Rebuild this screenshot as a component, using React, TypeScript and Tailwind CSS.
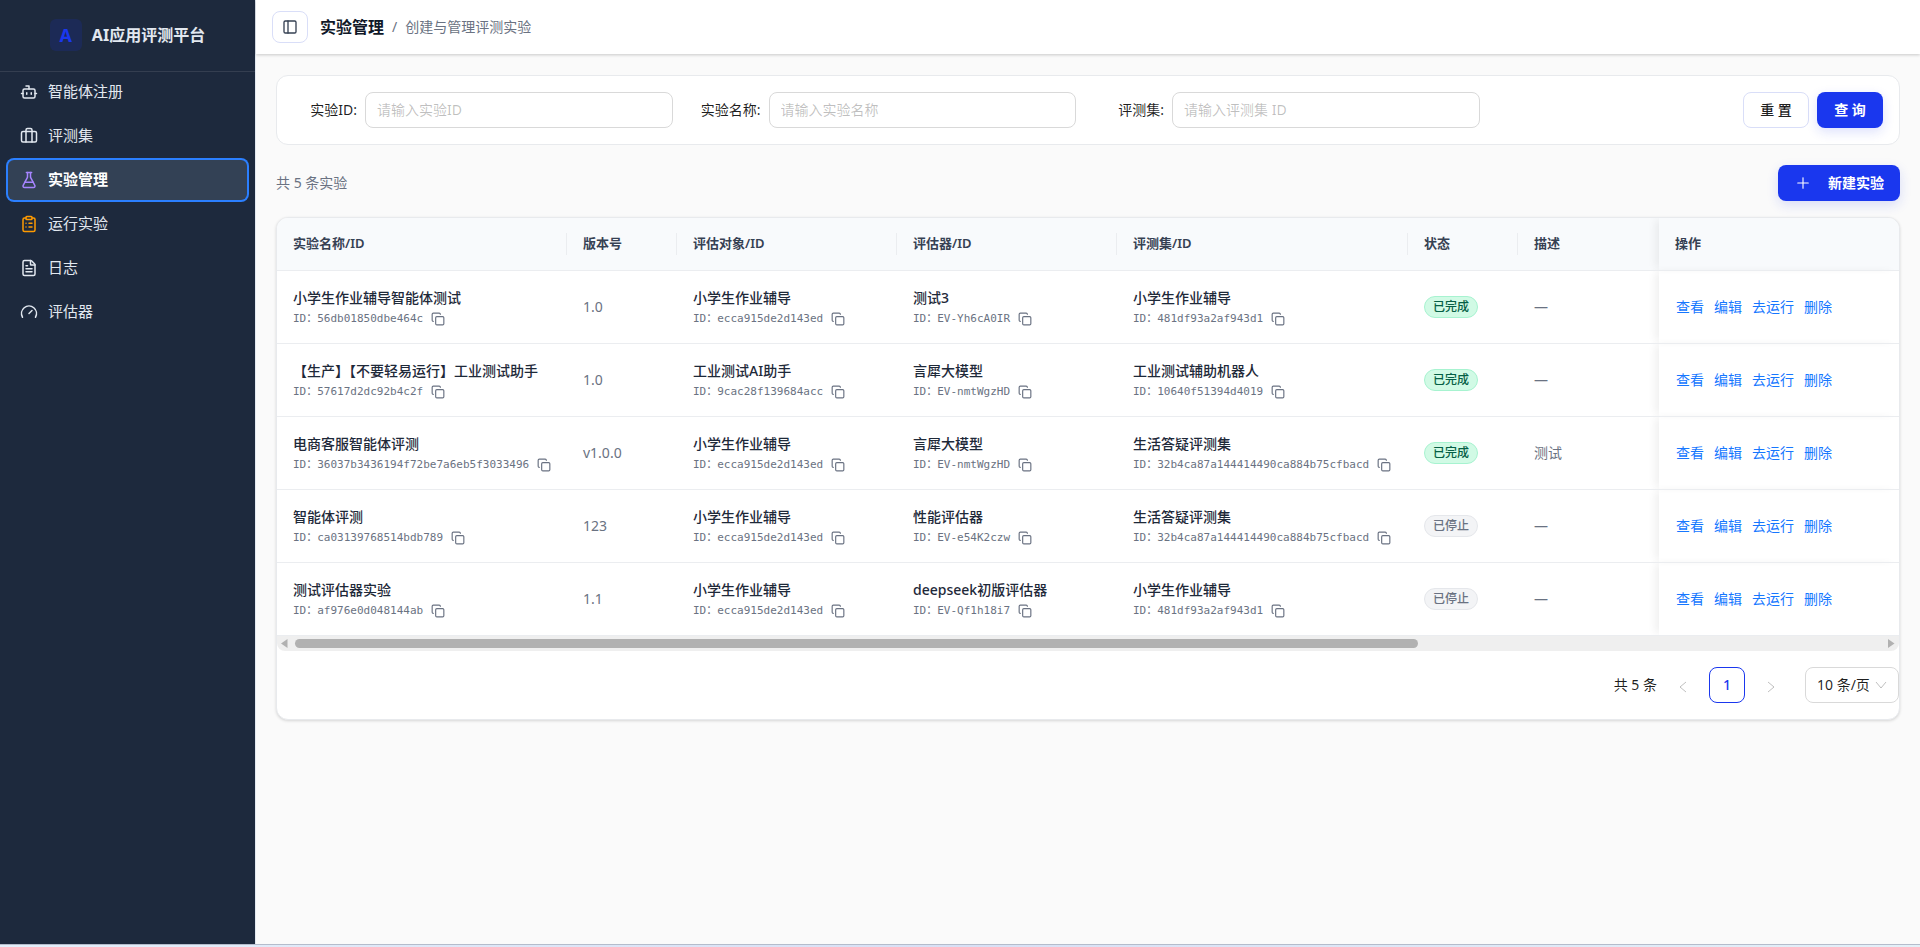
import { Bot, Briefcase, ClipboardList, Copy, FileText, FlaskConical, Gauge, PanelLeft, Plus } from 'lucide-react';

type Ref = { name: string; id: string };

type Experiment = {
  self: Ref;
  version: string;
  target: Ref;
  evaluator: Ref;
  dataset: Ref;
  status: 'done' | 'stopped';
  desc: string;
};

const homework: Ref = { name: '小学生作业辅导', id: 'ecca915de2d143ed' };
const yanxi: Ref = { name: '言犀大模型', id: 'EV-nmtWgzHD' };
const homeworkSet: Ref = { name: '小学生作业辅导', id: '481df93a2af943d1' };
const lifeSet: Ref = { name: '生活答疑评测集', id: '32b4ca87a144414490ca884b75cfbacd' };

const experiments: Experiment[] = [
  {
    self: { name: '小学生作业辅导智能体测试', id: '56db01850dbe464c' },
    version: '1.0',
    target: homework,
    evaluator: { name: '测试3', id: 'EV-Yh6cA0IR' },
    dataset: homeworkSet,
    status: 'done',
    desc: '—',
  },
  {
    self: { name: '【生产】【不要轻易运行】工业测试助手', id: '57617d2dc92b4c2f' },
    version: '1.0',
    target: { name: '工业测试AI助手', id: '9cac28f139684acc' },
    evaluator: yanxi,
    dataset: { name: '工业测试辅助机器人', id: '10640f51394d4019' },
    status: 'done',
    desc: '—',
  },
  {
    self: { name: '电商客服智能体评测', id: '36037b3436194f72be7a6eb5f3033496' },
    version: 'v1.0.0',
    target: homework,
    evaluator: yanxi,
    dataset: lifeSet,
    status: 'done',
    desc: '测试',
  },
  {
    self: { name: '智能体评测', id: 'ca03139768514bdb789' },
    version: '123',
    target: homework,
    evaluator: { name: '性能评估器', id: 'EV-e54K2czw' },
    dataset: lifeSet,
    status: 'stopped',
    desc: '—',
  },
  {
    self: { name: '测试评估器实验', id: 'af976e0d048144ab' },
    version: '1.1',
    target: homework,
    evaluator: { name: 'deepseek初版评估器', id: 'EV-Qf1h18i7' },
    dataset: homeworkSet,
    status: 'stopped',
    desc: '—',
  },
];

const menu = [
  { label: '智能体注册', icon: Bot, color: 'text-slate-200' },
  { label: '评测集', icon: Briefcase, color: 'text-slate-200' },
  { label: '实验管理', icon: FlaskConical, color: 'text-violet-400', active: true },
  { label: '运行实验', icon: ClipboardList, color: 'text-amber-500' },
  { label: '日志', icon: FileText, color: 'text-slate-200' },
  { label: '评估器', icon: Gauge, color: 'text-slate-200' },
];

const columns = [
  { title: '实验名称/ID', width: 'w-[290px]' },
  { title: '版本号', width: 'w-[110px]' },
  { title: '评估对象/ID', width: 'w-[220px]' },
  { title: '评估器/ID', width: 'w-[220px]' },
  { title: '评测集/ID', width: 'w-[291px]' },
  { title: '状态', width: 'w-[110px]' },
  { title: '描述', width: '' },
];

const Sidebar = () => (
  <aside className="w-64 shrink-0 border-r border-slate-200 bg-slate-800">
    <div className="flex h-[72px] items-center justify-center gap-2.5 border-b border-white/10 pb-0.5">
      <div className="flex size-8 items-center justify-center rounded-md bg-[#1a37ee]/15 text-lg font-bold text-[#1a37ee]">A</div>
      <span className="text-base font-bold text-slate-200">AI应用评测平台</span>
    </div>
    <nav className="flex flex-col gap-1 px-2">
      {menu.map(({ label, icon: Icon, color, active }) => (
        <a
          key={label}
          href="#"
          className={
            active
              ? 'flex h-10 items-center gap-2.5 rounded-md bg-[#334155] px-3 text-[15px] font-semibold text-white ring-2 ring-blue-500'
              : 'flex h-10 items-center gap-2.5 rounded-md px-3 text-[15px] text-slate-200'
          }
        >
          <Icon size={18} className={color} />
          {label}
        </a>
      ))}
    </nav>
  </aside>
);

const Field = ({ id, label, placeholder }: { id: string; label: string; placeholder: string }) => (
  <div className="flex items-center">
    <label htmlFor={id} className="w-[72px] shrink-0 pr-2 text-right whitespace-nowrap text-black/88">
      {label}:
    </label>
    <input
      id={id}
      placeholder={placeholder}
      className="h-9 w-full min-w-0 rounded-lg border border-[#d9d9d9] bg-white px-[11px] pb-0.5 placeholder:text-black/25"
    />
  </div>
);

const RefCell = ({ item }: { item: Ref }) => (
  <td className="px-4 pt-1">
    <div className="truncate font-medium text-gray-800">{item.name}</div>
    <div className="mt-px flex items-center gap-2 font-['DejaVu_Sans_Mono','Noto_Sans_CJK_SC',monospace] text-[11px] leading-5 text-gray-500">
      <span className="whitespace-nowrap">ID：{item.id}</span>
      <button aria-label="复制">
        <Copy size={14} />
      </button>
    </div>
  </td>
);

const Filters = () => (
  <section className="grid grid-cols-4 gap-6 rounded-xl border border-[#e8eaed] bg-white p-4">
    <Field id="exp-id" label="实验ID" placeholder="请输入实验ID" />
    <Field id="exp-name" label="实验名称" placeholder="请输入实验名称" />
    <Field id="exp-set" label="评测集" placeholder="请输入评测集 ID" />
    <div className="flex justify-end gap-2">
      <button className="h-9 w-[66px] rounded-lg border border-[#d9def8] bg-white font-medium text-black/88">重 置</button>
      <button className="h-9 w-[66px] rounded-lg bg-[#1a37ee] font-semibold text-white shadow-[0_4px_12px_rgba(26,55,238,0.15)]">查 询</button>
    </div>
  </section>
);

const ExperimentTable = () => (
  <table className="w-full table-fixed border-collapse text-left">
    <thead className="bg-[#f8fafc] text-[13px] text-gray-700">
      <tr className="h-[52px] border-b border-[#ebedf0]">
        {columns.map((c, i) => (
          <th key={c.title} className={`relative px-4 font-semibold ${c.width}`}>
            {c.title}
            {i < columns.length - 1 && <span className="absolute top-1/2 right-0 h-5.5 w-px -translate-y-1/2 bg-[#ebedf0]" />}
          </th>
        ))}
        <th className="w-60 px-4 font-semibold shadow-[-6px_0_8px_-2px_rgba(5,5,5,0.06)]">操作</th>
      </tr>
    </thead>
    <tbody>
      {experiments.map((e) => (
        <tr key={e.self.id} className="h-[73px] border-b border-[#ebedf0]">
          <RefCell item={e.self} />
          <td className="px-4 text-gray-500">{e.version}</td>
          <RefCell item={e.target} />
          <RefCell item={e.evaluator} />
          <RefCell item={e.dataset} />
          <td className="px-4">
            {e.status === 'done' ? (
              <span className="inline-block rounded-full border border-[#a7f3d0] bg-[#d1fae5] px-2 text-xs leading-5 font-medium text-[#065f46]">已完成</span>
            ) : (
              <span className="inline-block rounded-full border border-gray-200 bg-gray-100 px-2 text-xs leading-5 font-medium text-gray-500">已停止</span>
            )}
          </td>
          <td className="px-4 text-gray-500">{e.desc}</td>
          <td className="px-4 shadow-[-6px_0_8px_-2px_rgba(5,5,5,0.06)]">
            <div className="flex gap-2 text-[#1677ff]">
              <a href="#" className="px-px">查看</a>
              <a href="#" className="px-px">编辑</a>
              <a href="#" className="px-px">去运行</a>
              <a href="#" className="px-px">删除</a>
            </div>
          </td>
        </tr>
      ))}
    </tbody>
  </table>
);

const ScrollBar = () => (
  <div className="flex h-[15px] items-center gap-1 rounded-b-lg bg-[#efefef] px-1 text-[#b1b1b1]">
    <svg width="7" height="9" viewBox="0 0 7 9" fill="currentColor">
      <path d="M6.5 0v9L0 4.5z" />
    </svg>
    <div className="flex-1 px-[3px]">
      <div className="h-[9px] w-17/24 rounded-full bg-[#b1b1b1]" />
    </div>
    <svg width="7" height="9" viewBox="0 0 7 9" fill="currentColor">
      <path d="M0 0v9l6.5-4.5z" />
    </svg>
  </div>
);

const Arrow = ({ d, className = '' }: { d: string; className?: string }) => (
  <svg width="12" height="12" viewBox="0 0 12 12" fill="none" stroke="currentColor" className={className}>
    <path d={d} />
  </svg>
);

const Pagination = () => (
  <div className="flex items-center justify-end gap-2 py-4 text-black/88">
    <span>共 5 条</span>
    <button aria-label="上一页" disabled className="flex size-9 items-center justify-center pt-1 text-black/25">
      <Arrow d="M9 1 3 6l6 5" />
    </button>
    <button className="size-9 rounded-lg border border-[#1a37ee] font-medium text-[#1a37ee]">1</button>
    <button aria-label="下一页" disabled className="flex size-9 items-center justify-center pt-1 text-black/25">
      <Arrow d="m3 1 6 5-6 5" />
    </button>
    <div className="relative ml-2">
      <select aria-label="每页条数" className="h-9 w-[94px] appearance-none rounded-lg border border-[#d9d9d9] bg-white pl-[11px]">
        <option>10 条/页</option>
      </select>
      <Arrow d="m1 3 5 6 5-6" className="pointer-events-none absolute top-3 right-3 text-black/25" />
    </div>
  </div>
);

const App = () => {
  return (
    <div className="flex h-screen flex-col bg-[#fafafa] font-['Noto_Sans','Noto_Sans_CJK_SC',sans-serif] text-sm">
      <div className="flex min-h-0 flex-1 border-b border-[#b4bccb]">
        <Sidebar />
        <div className="flex min-w-0 flex-1 flex-col">
          <header className="flex h-[54px] shrink-0 items-center bg-white px-4 shadow-[0_1px_3px_rgba(0,0,0,0.2)]">
            <button aria-label="收起侧栏" className="flex h-8 w-9 items-center justify-center rounded-lg border border-[#d9def8] text-gray-700">
              <PanelLeft size={16} />
            </button>
            <h1 className="ml-3 text-base font-semibold text-gray-900">实验管理</h1>
            <span className="mx-2 text-gray-500">/</span>
            <span className="text-gray-500">创建与管理评测实验</span>
          </header>

          <main className="flex-1 overflow-hidden px-5 pt-[21px]">
            <Filters />
            <div className="mt-5 mb-4 flex items-center justify-between">
              <span className="text-gray-500">共 5 条实验</span>
              <button className="flex h-9 items-center gap-4 rounded-lg bg-[#1a37ee] px-4 font-semibold text-white shadow-[0_4px_12px_rgba(26,55,238,0.15)]">
                <Plus size={18} strokeWidth={1.5} />
                新建实验
              </button>
            </div>
            <section className="overflow-hidden rounded-xl border border-[#e8eaed] bg-white shadow-[0_1px_3px_rgba(0,0,0,0.15)]">
              <ExperimentTable />
              <ScrollBar />
              <Pagination />
            </section>
          </main>
        </div>
      </div>
      <div className="h-0.5 bg-linear-to-r from-[#e3eefa] via-[#d8e0f5] to-[#e3f0f8]" />
    </div>
  );
};

export default App;
